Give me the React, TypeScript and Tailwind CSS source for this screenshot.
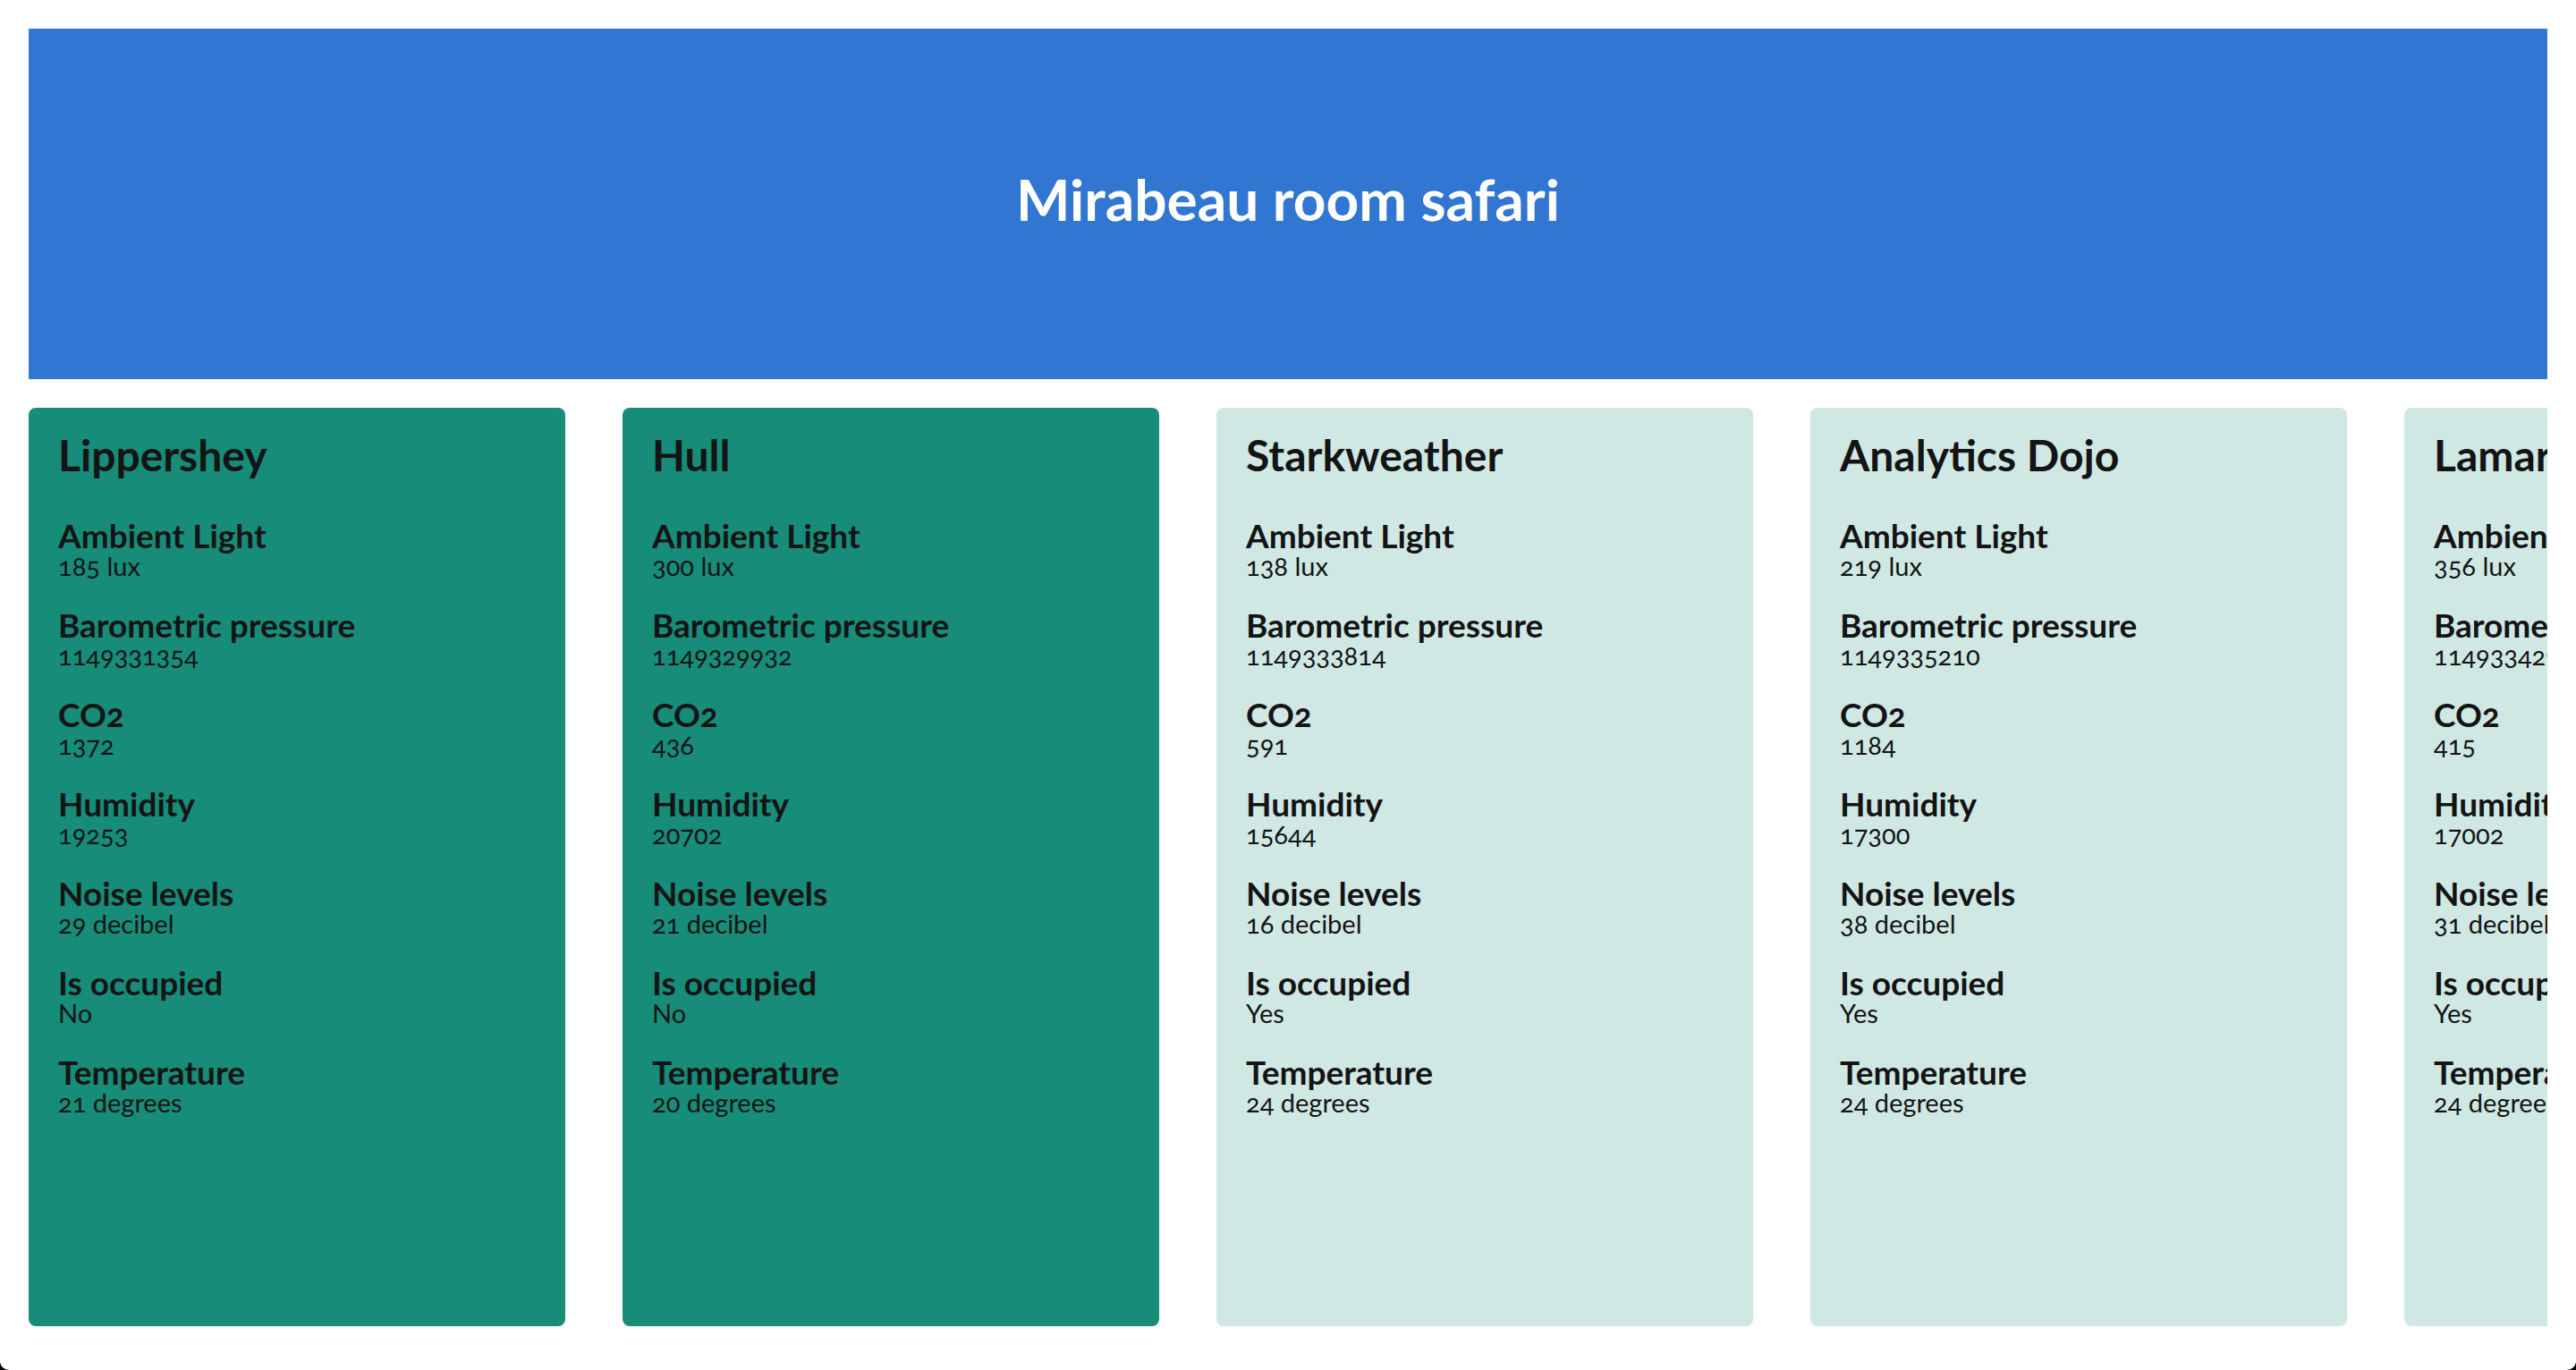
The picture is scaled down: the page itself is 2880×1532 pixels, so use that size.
import React from "react";

type Room = {
  name: string;
  dark: boolean;
  values: string[];
};

const labels = [
  "Ambient Light",
  "Barometric pressure",
  "CO2",
  "Humidity",
  "Noise levels",
  "Is occupied",
  "Temperature",
];

const rooms: Room[] = [
  { name: "Lippershey", dark: true, values: ["185 lux", "1149331354", "1372", "19253", "29 decibel", "No", "21 degrees"] },
  { name: "Hull", dark: true, values: ["300 lux", "1149329932", "436", "20702", "21 decibel", "No", "20 degrees"] },
  { name: "Starkweather", dark: false, values: ["138 lux", "1149333814", "591", "15644", "16 decibel", "Yes", "24 degrees"] },
  { name: "Analytics Dojo", dark: false, values: ["219 lux", "1149335210", "1184", "17300", "38 decibel", "Yes", "24 degrees"] },
  { name: "Lamarr", dark: false, values: ["356 lux", "1149334296", "415", "17002", "31 decibel", "Yes", "24 degrees"] },
];

function Card({ room }: { room: Room }) {
  return (
    <div
      className={
        (room.dark ? "bg-[#168c79] " : "bg-[#cfe8e4] ") +
        "w-[600px] h-[1027px] shrink-0 rounded-lg px-[33px] pt-[24px] text-[#141414]"
      }
    >
      <h2 className="text-[48px] leading-[58px] font-bold">{room.name}</h2>
      <div className="mt-[43px] flex flex-col gap-[33px]">
        {labels.map((label, i) => (
          <div key={label} className="flex flex-col">
            <div className="text-[37px] leading-[36px] font-bold">{label}</div>
            <div className="text-[29px] leading-[31px] font-normal">{room.values[i]}</div>
          </div>
        ))}
      </div>
    </div>
  );
}

export default function App() {
  return (
    <div
      className="relative min-h-screen bg-white p-8 flex flex-col gap-8 oldstyle-nums"
      style={{ fontFamily: "Lato, 'Open Sans', sans-serif" }}
    >
      <header className="h-[392px] bg-[#3176d0] flex items-center justify-center pb-[10px]">
        <h1 className="text-white text-[64px] font-bold">Mirabeau room safari</h1>
      </header>
      <div className="flex gap-16 overflow-hidden">
        {rooms.map((r) => (
          <Card key={r.name} room={r} />
        ))}
      </div>
      <div className="absolute bottom-0 left-0 w-[10px] h-[10px] bg-black">
        <div className="w-full h-full bg-white rounded-bl-[10px]" />
      </div>
      <div className="absolute bottom-0 right-0 w-[10px] h-[10px] bg-black">
        <div className="w-full h-full bg-white rounded-br-[10px]" />
      </div>
    </div>
  );
}
